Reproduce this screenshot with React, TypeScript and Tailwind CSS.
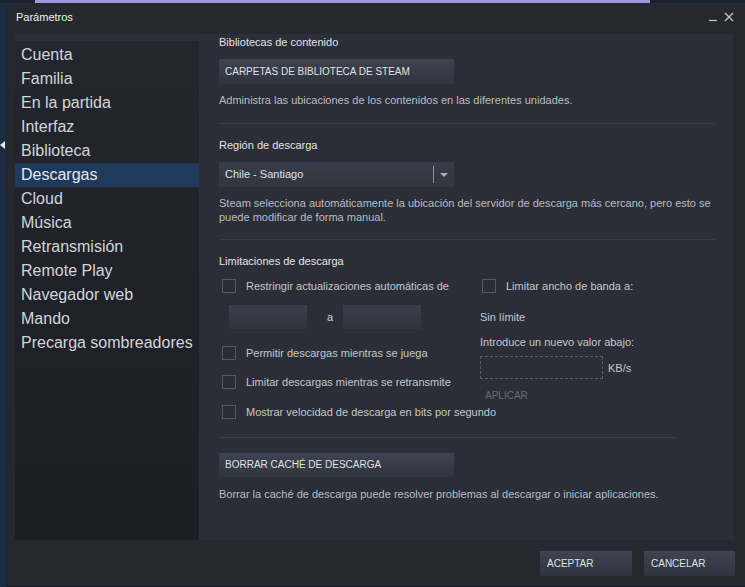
import React from 'react';

const font = { fontFamily: '"Liberation Sans", Arial, sans-serif' };

const menuList = [
  'Cuenta',
  'Familia',
  'En la partida',
  'Interfaz',
  'Biblioteca',
  'Descargas',
  'Cloud',
  'Música',
  'Retransmisión',
  'Remote Play',
  'Navegador web',
  'Mando',
  'Precarga sombreadores',
];

const Checkbox = () => (
  <div className="w-[14px] h-[14px] shrink-0 border border-[#555962] bg-[#2a2d34]" />
);

const SteamButton = ({ label, className = '' }: { label: string; className?: string }) => (
  <div
    className={`flex items-center bg-gradient-to-b from-[#3e4450] to-[#30343e] text-[10px] text-[#dfe3e6] leading-none ${className}`}
  >
    {label}
  </div>
);

const Divider = ({ w }: { w: string }) => <div className={`h-px bg-[#3a3d45] ${w}`} />;

export default function App() {
  return (
    <div className="w-[745px] h-[587px] flex flex-col bg-[#1c212b] overflow-hidden" style={font}>
      {/* backdrop strip above the dialog */}
      <div className="h-[3px] flex shrink-0 bg-[#1a2130]">
        <div className="ml-[35px] w-[615px] bg-[#a297dd]" />
      </div>

      <div className="flex flex-1">
        <div className="w-[6px] shrink-0 bg-[#1b2d42] pt-[138px]">
          <div className="w-0 h-0 border-y-[4px] border-y-transparent border-r-[5px] border-r-[#e8e8e8]" />
        </div>

        <div className="w-[739px] h-[582px] bg-[#25282f] flex flex-col">
          {/* title bar */}
          <div className="h-[31px] shrink-0 flex items-center justify-between pl-[10px] pr-[11px]">
            <span className="text-[11px] text-[#f0f0f0] leading-[14px] -mt-[4px]">Parámetros</span>
            <div className="flex items-center gap-[7px] -mt-[3px]">
              <svg width="8" height="10" viewBox="0 0 8 10">
                <line x1="0" y1="8.5" x2="8" y2="8.5" stroke="#bdbdbd" strokeWidth="1.3" />
              </svg>
              <svg width="10" height="10" viewBox="0 0 10 10">
                <path d="M1 1 L9 9 M9 1 L1 9" stroke="#c4c4c4" strokeWidth="1.4" />
              </svg>
            </div>
          </div>

          {/* body */}
          <div className="h-[506px] shrink-0 flex pl-[9px] pr-[12px]">
            <nav className="w-[184px] shrink-0 flex flex-col bg-gradient-to-b from-[#23262d] to-[#1c1e25]">
              <div className="h-[7px] bg-[#2a2d35]" />
              <div className="h-[2px]" />
              {menuList.map((name) => (
                <div
                  key={name}
                  className={`h-[24px] flex items-center pl-[6px] text-[16px] leading-none ${
                    name === 'Descargas' ? 'bg-[#1f3a5a] text-[#e6e8ea]' : 'text-[#d3d5d8]'
                  }`}
                >
                  {name}
                </div>
              ))}
            </nav>

            <section className="flex-1 bg-[#2b2e36] pl-[20px] flex flex-col text-[11px] leading-[14px]">
              <div className="mt-[1px] text-[#e2e4e6]">Bibliotecas de contenido</div>
              <SteamButton label="CARPETAS DE BIBLIOTECA DE STEAM" className="mt-[10px] w-[235px] h-[25px] pl-[6px]" />
              <div className="mt-[9px] text-[#b9bdc2]">
                Administra las ubicaciones de los contenidos en las diferentes unidades.
              </div>
              <div className="mt-[16px]">
                <Divider w="w-[496px]" />
              </div>

              <div className="mt-[14px] text-[#e2e4e6]">Región de descarga</div>
              <div className="mt-[10px] w-[235px] h-[25px] flex items-center bg-gradient-to-b from-[#383d47] to-[#31353e]">
                <span className="flex-1 pl-[6px] -mt-px text-[#dfe3e6]">Chile - Santiago</span>
                <div className="w-px h-[17px] bg-[#8d9096]" />
                <div className="w-[20px] flex justify-center">
                  <div className="w-0 h-0 border-x-[4px] border-x-transparent border-t-[4px] border-t-[#aeb2b8]" />
                </div>
              </div>
              <div className="mt-[9px] w-[496px] text-[#b9bdc2]">
                Steam selecciona automáticamente la ubicación del servidor de descarga más cercano, pero esto se
                puede modificar de forma manual.
              </div>
              <div className="mt-[15px]">
                <Divider w="w-[496px]" />
              </div>

              <div className="mt-[14px] text-[#e2e4e6]">Limitaciones de descarga</div>
              <div className="flex mt-[11px] text-[#c4c7cb]">
                <div className="w-[261px] shrink-0 flex flex-col">
                  <div className="flex items-center pl-[3px] gap-[10px]">
                    <Checkbox />
                    <span>Restringir actualizaciones automáticas de</span>
                  </div>
                  <div className="flex items-center mt-[12px] pl-[10px] h-[24px]">
                    <div className="w-[78px] h-[24px] bg-gradient-to-b from-[#3a3f49] to-[#30343d]" />
                    <span className="ml-[20px] text-[#d5d8db]">a</span>
                    <div className="ml-[10px] w-[78px] h-[24px] bg-gradient-to-b from-[#3a3f49] to-[#30343d]" />
                  </div>
                  <div className="flex items-center pl-[3px] gap-[10px] mt-[17px]">
                    <Checkbox />
                    <span>Permitir descargas mientras se juega</span>
                  </div>
                  <div className="flex items-center pl-[3px] gap-[10px] mt-[15px]">
                    <Checkbox />
                    <span>Limitar descargas mientras se retransmite</span>
                  </div>
                  <div className="flex items-center pl-[3px] gap-[10px] mt-[16px] whitespace-nowrap">
                    <Checkbox />
                    <span>Mostrar velocidad de descarga en bits por segundo</span>
                  </div>
                </div>

                <div className="flex flex-col">
                  <div className="flex items-center pl-[2px] gap-[10px]">
                    <Checkbox />
                    <span>Limitar ancho de banda a:</span>
                  </div>
                  <div className="mt-[17px]">Sin límite</div>
                  <div className="mt-[11px]">Introduce un nuevo valor abajo:</div>
                  <div className="flex items-center mt-[7px]">
                    <div className="w-[123px] h-[23px] border border-dashed border-[#5b5e66]" />
                    <span className="ml-[5px]">KB/s</span>
                  </div>
                  <div className="mt-[10px] pl-[5px] text-[10px] text-[#686c73]">APLICAR</div>
                </div>
              </div>

              <div className="mt-[18px]">
                <Divider w="w-[457px]" />
              </div>
              <SteamButton label="BORRAR CACHÉ DE DESCARGA" className="mt-[15px] w-[235px] h-[24px] pl-[6px]" />
              <div className="mt-[10px] text-[#b9bdc2]">
                Borrar la caché de descarga puede resolver problemas al descargar o iniciar aplicaciones.
              </div>
            </section>
          </div>

          {/* footer */}
          <div className="flex-1 flex justify-end items-start pt-[11px] pr-[10px] gap-[12px]">
            <SteamButton label="ACEPTAR" className="w-[92px] h-[25px] pl-[7px]" />
            <SteamButton label="CANCELAR" className="w-[91px] h-[25px] pl-[7px]" />
          </div>
        </div>
      </div>
    </div>
  );
}
